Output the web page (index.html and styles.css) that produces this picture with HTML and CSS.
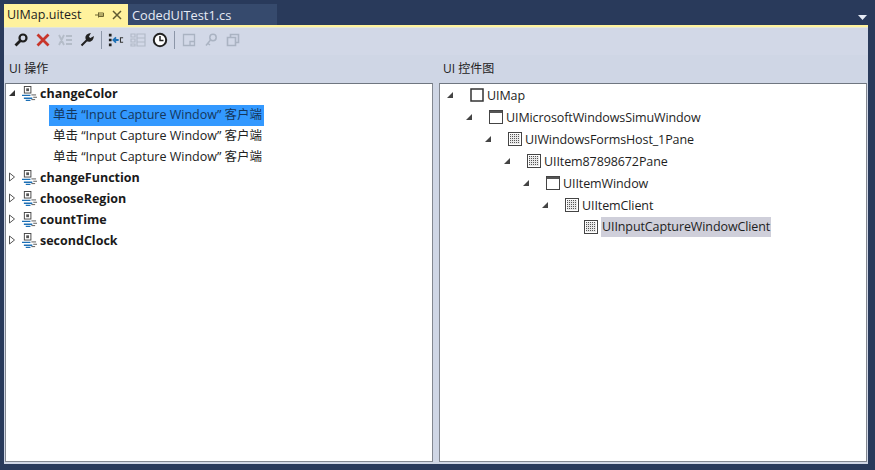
FILE: index.html
```html
<!DOCTYPE html>
<html lang="zh">
<head>
<meta charset="utf-8">
<title>UIMap.uitest</title>
<link rel="stylesheet" href="styles.css">
</head>
<body>
<div class="tabstrip">
  <div class="tab active"><span class="tab-name">UIMap.uitest</span>
    <svg class="pin" width="10" height="10" viewBox="0 0 10 10"><path d="M0 5h3M3.500 2.500v5M3.500 3h5v3.500h-5M3.500 5h5" fill="none" stroke="#6d6430"/></svg>
    <svg class="close" width="10" height="10" viewBox="0 0 10 10"><path d="M1 1l8 8M9 1l-8 8" fill="none" stroke="#5f5a30" stroke-width="1.500"/></svg>
  </div>
  <div class="tab inactive"><span class="tab-name">CodedUITest1.cs</span></div>
  <svg class="overflow" width="9" height="5" viewBox="0 0 9 5"><path d="M0 0h9L4.500 5z" fill="#e6ebf5"/></svg>
</div>
<div class="doc">
  <div class="toolbar">
    <svg class="tool" width="16" height="16" viewBox="0 0 16 16"><circle cx="10" cy="6" r="3.500" fill="none" stroke="#1e1e1e" stroke-width="2.200"/><path d="M7.500 8.500L2.500 13.500" stroke="#1e1e1e" stroke-width="2.800"/></svg>
    <svg class="tool" width="16" height="16" viewBox="0 0 16 16"><path d="M2.500 2.500l11 11M13.500 2.500l-11 11" stroke="#c8352a" stroke-width="2.800"/></svg>
    <svg class="tool" width="16" height="16" viewBox="0 0 16 16"><path d="M2 3l5 10M7 3l-5 10M9 4h6M9 8h6M9 12h6" fill="none" stroke="#b4bcc8" stroke-width="1.800"/></svg>
    <svg class="tool" width="16" height="16" viewBox="0 0 16 16"><path d="M2.500 13.500L8 8M8 8a3.500 3.500 0 0 1 2-5.500L8.700 5l2.300 2.300 2.500-1.300A3.500 3.500 0 0 1 8 8z" fill="#222" stroke="#222" stroke-width="2"/></svg>
    <span class="sep"></span>
    <svg class="tool" width="16" height="16" viewBox="0 0 18 16"><path d="M1 1h3v3H1zM1 6.500h3v3H1zM1 12h3v3H1z" fill="#1e1e1e"/><path d="M12 8H6M9 5L6 8l3 3" fill="none" stroke="#1c6fb5" stroke-width="2"/><path d="M17 5.500h-3v5h3" fill="none" stroke="#333" stroke-width="1.200"/></svg>
    <svg class="tool" width="16" height="16" viewBox="0 0 16 16"><path d="M1 2h4v3H1zM1 7h4v3H1zM1 12h4v2H1zM7 2h8v12H7zM7 6h8M7 10h8" fill="none" stroke="#b2bac8" stroke-width="1.200"/></svg>
    <svg class="tool" width="16" height="16" viewBox="0 0 16 16"><circle cx="8" cy="8" r="6.200" fill="#fff" stroke="#222" stroke-width="2"/><path d="M8 4v4.500h3.500" fill="none" stroke="#222" stroke-width="1.500"/></svg>
    <span class="sep"></span>
    <svg class="tool" width="16" height="16" viewBox="0 0 16 16"><path d="M2.500 2.500h11v11h-11zM9 13.500v-4h4.500" fill="none" stroke="#aab3c2" stroke-width="1.300"/></svg>
    <svg class="tool" width="16" height="16" viewBox="0 0 16 16"><circle cx="10" cy="5.500" r="3.200" fill="none" stroke="#aab3c2" stroke-width="1.500"/><path d="M7.500 8L3 13.500M5 11.500l2 1.500" fill="none" stroke="#aab3c2" stroke-width="1.500"/></svg>
    <svg class="tool" width="16" height="16" viewBox="0 0 16 16"><path d="M5.500 5.500v-3h8v8h-3M2.500 5.500h8v8h-8z" fill="none" stroke="#aab3c2" stroke-width="1.600"/></svg>
  </div>
  <div class="panes">
    <section class="pane">
      <h2 class="pane-title">UI 操作</h2>
      <div class="tree actions">
        <div class="row bold"><svg class="arrow" width="8" height="8" viewBox="0 0 8 8"><path d="M7 1v6H1z" fill="#333"/></svg><svg class="method" width="17" height="15" viewBox="0 0 18 16"><use href="#m"/></svg><span>changeColor</span></div>
        <div class="row step"><span class="selected">单击 “Input Capture Window” 客户端</span></div>
        <div class="row step"><span>单击 “Input Capture Window” 客户端</span></div>
        <div class="row step"><span>单击 “Input Capture Window” 客户端</span></div>
        <div class="row bold"><svg class="arrow" width="8" height="10" viewBox="0 0 8 10"><path d="M1.500 1l5 4-5 4z" fill="#fff" stroke="#555"/></svg><svg class="method" width="17" height="15" viewBox="0 0 18 16"><use href="#m"/></svg><span>changeFunction</span></div>
        <div class="row bold"><svg class="arrow" width="8" height="10" viewBox="0 0 8 10"><path d="M1.500 1l5 4-5 4z" fill="#fff" stroke="#555"/></svg><svg class="method" width="17" height="15" viewBox="0 0 18 16"><use href="#m"/></svg><span>chooseRegion</span></div>
        <div class="row bold"><svg class="arrow" width="8" height="10" viewBox="0 0 8 10"><path d="M1.500 1l5 4-5 4z" fill="#fff" stroke="#555"/></svg><svg class="method" width="17" height="15" viewBox="0 0 18 16"><use href="#m"/></svg><span>countTime</span></div>
        <div class="row bold"><svg class="arrow" width="8" height="10" viewBox="0 0 8 10"><path d="M1.500 1l5 4-5 4z" fill="#fff" stroke="#555"/></svg><svg class="method" width="17" height="15" viewBox="0 0 18 16"><use href="#m"/></svg><span>secondClock</span></div>
      </div>
    </section>
    <section class="pane">
      <h2 class="pane-title">UI 控件图</h2>
      <div class="tree controls">
        <div class="node l0"><svg class="tri" width="8" height="8" viewBox="0 0 8 8"><path d="M7 1v6H1z" fill="#444"/></svg><svg class="nicon" width="14" height="14" viewBox="0 0 14 14"><rect x="1" y="1" width="12" height="12" fill="#fff" stroke="#333" stroke-width="1.500"/></svg><span>UIMap</span></div>
        <div class="node l1"><svg class="tri" width="8" height="8" viewBox="0 0 8 8"><path d="M7 1v6H1z" fill="#444"/></svg><svg class="nicon" width="14" height="14" viewBox="0 0 14 14"><use href="#w"/></svg><span>UIMicrosoftWindowsSimuWindow</span></div>
        <div class="node l2"><svg class="tri" width="8" height="8" viewBox="0 0 8 8"><path d="M7 1v6H1z" fill="#444"/></svg><svg class="nicon" width="14" height="14" viewBox="0 0 14 14"><use href="#p"/></svg><span>UIWindowsFormsHost_1Pane</span></div>
        <div class="node l3"><svg class="tri" width="8" height="8" viewBox="0 0 8 8"><path d="M7 1v6H1z" fill="#444"/></svg><svg class="nicon" width="14" height="14" viewBox="0 0 14 14"><use href="#p"/></svg><span>UIItem87898672Pane</span></div>
        <div class="node l4"><svg class="tri" width="8" height="8" viewBox="0 0 8 8"><path d="M7 1v6H1z" fill="#444"/></svg><svg class="nicon" width="14" height="14" viewBox="0 0 14 14"><use href="#w"/></svg><span>UIItemWindow</span></div>
        <div class="node l5"><svg class="tri" width="8" height="8" viewBox="0 0 8 8"><path d="M7 1v6H1z" fill="#444"/></svg><svg class="nicon" width="14" height="14" viewBox="0 0 14 14"><use href="#p"/></svg><span>UIItemClient</span></div>
        <div class="node l6"><svg class="tri" width="8" height="8" viewBox="0 0 8 8"></svg><svg class="nicon" width="14" height="14" viewBox="0 0 14 14"><use href="#p"/></svg><span class="current">UIInputCaptureWindowClient</span></div>
      </div>
    </section>
  </div>
</div>
<svg class="defs" width="0" height="0">
  <defs>
    <g id="m"><rect x="3.500" y="0.500" width="7" height="7" fill="#fff" stroke="#444"/><rect x="5.500" y="2.500" width="3" height="3" fill="#555"/><path d="M1 10h9M3 13h9M5 15.500h5" stroke="#1c6fb5" stroke-width="1.500"/><path d="M11 9.500h5M13 12h4M11 14.500h4" stroke="#555"/></g>
    <g id="w"><rect x="0.500" y="0.500" width="13" height="13" fill="#fff" stroke="#444"/><rect x="1" y="1" width="12" height="2" fill="#555"/></g>
    <pattern id="dots" width="2" height="2" patternUnits="userSpaceOnUse"><rect width="2" height="2" fill="#e8e8e8"/><rect width="1" height="1" fill="#555"/></pattern>
    <g id="p"><rect x="0.500" y="0.500" width="13" height="13" fill="#fff" stroke="#444"/><rect x="2" y="2" width="10" height="10" fill="url(#dots)"/></g>
  </defs>
</svg>
</body>
</html>
```
FILE: styles.css
```css
* { box-sizing: border-box; }
html, body { margin: 0; height: 100%; }
body {
  width: 875px;
  height: 470px;
  overflow: hidden;
  background: #293a5b;
  padding: 4px 7px 6px 4px;
  display: flex;
  flex-direction: column;
  font-family: "Open Sans", "Noto Sans CJK SC", sans-serif;
  font-size: 12.5px;
  color: #1e1e1e;
}
.tabstrip {
  height: 21px;
  display: flex;
  align-items: stretch;
  position: relative;
}
.tab { display: flex; align-items: center; }
.tab.active { width: 124px; background: #fff29d; padding-left: 3px; color: #1e1e1e; font-size: 12.5px; }
.tab.active .pin { margin-left: 14px; }
.tab.active .close { margin-left: 7px; }
.tab.inactive { width: 149px; background: #364a6d; padding-left: 4px; color: #e6ebf5; font-size: 12.8px; }
.overflow { position: absolute; right: 1px; top: 11px; }
.doc {
  flex: 1;
  display: flex;
  flex-direction: column;
  background: #cfd6e5;
  border-top: 2px solid #fff29d;
}
.toolbar {
  height: 28px;
  display: flex;
  align-items: center;
  padding: 0 0 3px 9px;
  gap: 6px;
  border-top: 1px solid #e4e7d8;
  background: #d2d8e7;
}
.tool { flex: none; }
.sep { width: 1px; height: 18px; background: #8c96a8; }
.panes {
  flex: 1;
  display: flex;
  gap: 6px;
  padding: 0 1px 2px 1px;
}
.pane { flex: 1; display: flex; flex-direction: column; min-width: 0; }
.pane-title {
  margin: 0;
  height: 28px;
  padding: 0 0 3px 4px;
  display: flex;
  align-items: center;
  font-weight: 400;
  font-size: 12px;
  color: #222;
}
.tree {
  flex: 1;
  background: #fff;
  border: 1px solid #828790;
  border-top-color: #6f7680;
}
.row { height: 21px; display: flex; align-items: center; white-space: nowrap; }
.row.bold { font-weight: 700; font-size: 12.500px; padding: 0 0 3px 2px; color: #1a1a1a; }
.arrow { flex: none; margin-right: 5px; }
.method { flex: none; margin-right: 2px; }
.row.step { padding-left: 43px; font-size: 12.500px; color: #222; }
.row.step span { padding: 0 0 2px 4px; height: 21px; line-height: 19px; width: 215px; display: block; }
.row.step .selected { background: #3399ff; color: #14365c; }
.node { height: 22px; display: flex; align-items: center; white-space: nowrap; letter-spacing: -0.1px; }
.tri { flex: none; margin-right: 16px; }
.nicon { flex: none; margin-right: 3px; }
.l0 { padding-left: 6px; }
.l1 { padding-left: 25px; }
.l2 { padding-left: 44px; }
.l3 { padding-left: 63px; }
.l4 { padding-left: 82px; }
.l5 { padding-left: 101px; }
.l6 { padding-left: 120px; }
.current { background: #cfcfda; height: 20px; line-height: 19px; padding: 0 1px; }
.defs { position: absolute; }
```
